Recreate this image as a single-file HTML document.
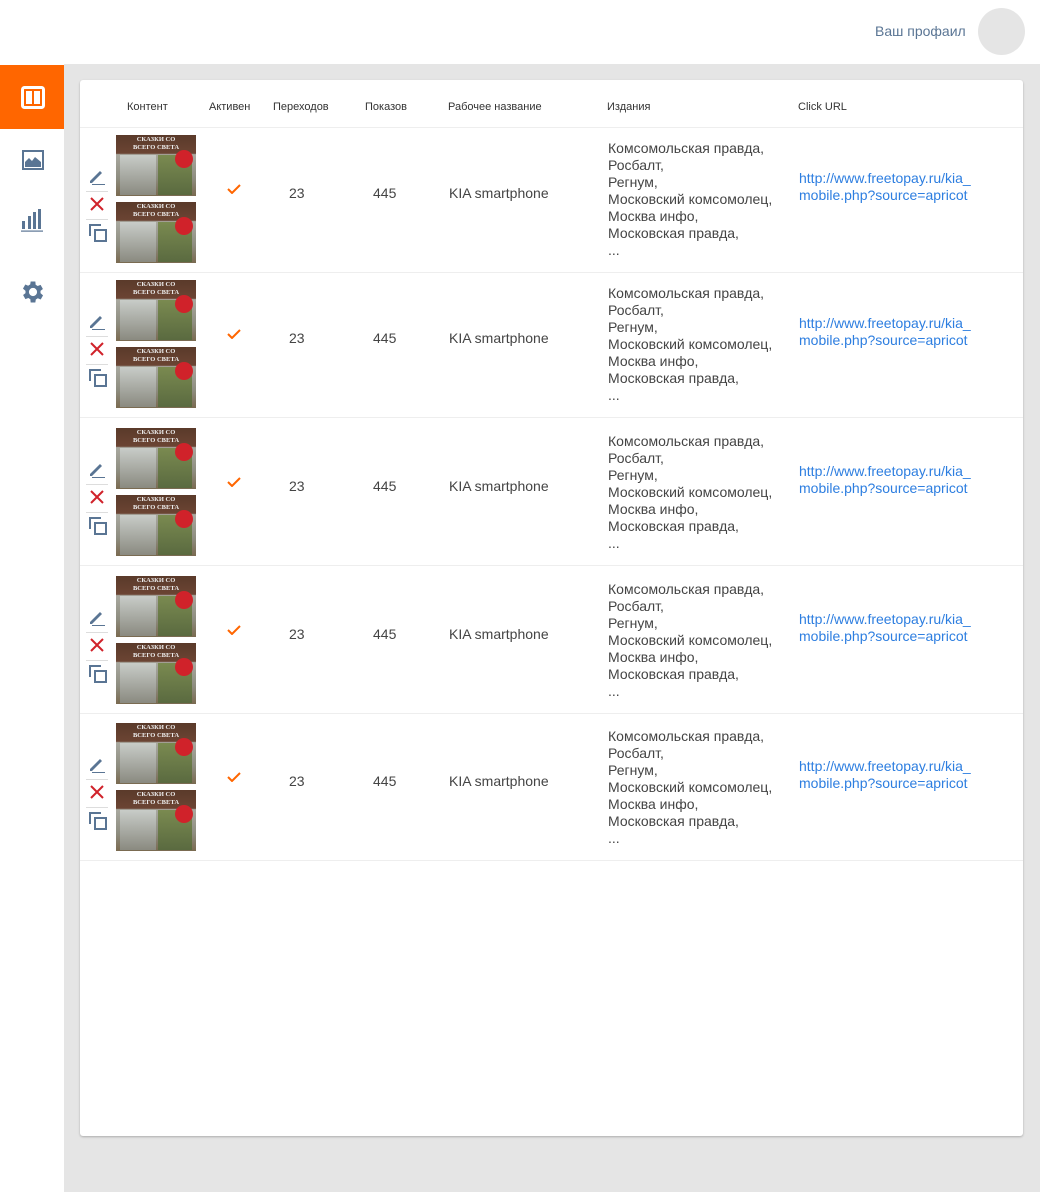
<!DOCTYPE html><html><head><meta charset="utf-8"><style>
*{box-sizing:border-box;margin:0;padding:0}
body{width:1040px;height:1192px;background:#e5e5e5;font-family:"Liberation Sans",sans-serif;position:relative;overflow:hidden;color:#444}
.top{position:absolute;left:0;top:0;width:1040px;height:64px;background:#fff}
.prof{position:absolute;left:875px;top:23px;font-size:14px;color:#5a7594}
.av{position:absolute;left:978px;top:8px;width:47px;height:47px;border-radius:50%;background:#e5e5e5}
.side{position:absolute;left:0;top:64px;width:64px;height:1128px;background:#fff}
.act{position:absolute;left:0;top:65px;width:64px;height:64px;background:#ff6600}
.card{position:absolute;left:80px;top:80px;width:943px;height:1056px;background:#fff;border-radius:3px;box-shadow:0 1px 2px rgba(0,0,0,.25)}
.h{position:absolute;top:21px;font-size:11px;color:#333}
.hl{position:absolute;left:0;right:0;top:47px;border-top:1px solid #eee}
.row{position:absolute;left:0;width:943px;border-bottom:1px solid #eee}
.im{position:absolute;left:36px;width:80px;height:61px;background:linear-gradient(#5a3a2a 0,#6b4433 30%,#a9a9a0 32%,#8e8d80 70%,#7a6a50 100%)}
.im i{position:absolute;left:4px;top:20px;width:36px;height:40px;background:linear-gradient(#c8ccc8,#8a8a80)}
.im b{position:absolute;left:42px;top:20px;width:34px;height:40px;background:linear-gradient(#7a8a50,#5a6a40)}
.im:before{content:"СКАЗКИ СО ВСЕГО СВЕТА";position:absolute;left:10px;right:10px;top:1px;text-align:center;font:bold 6.5px/8px "Liberation Serif",serif;color:#eee}
.im:after{content:"";position:absolute;right:3px;top:15px;width:18px;height:18px;border-radius:50%;background:#d0222a}
.t{position:absolute;font-size:14px;line-height:17px}
.u{color:#2d7ee0}
.sep{position:absolute;left:6px;width:22px;border-top:1px solid #ddd}
</style></head><body>
<div class="top"><div class="prof">Ваш профаил</div><div class="av"></div></div>
<div class="side"></div>
<div class="act"></div>
<svg style="position:absolute;left:21px;top:86px" width="24" height="24" viewBox="0 0 24 24"><rect x="1.5" y="1.5" width="21" height="20" rx="2" fill="none" stroke="#fff" stroke-width="3"/><rect x="5" y="5" width="6" height="13" fill="#fff"/><rect x="13" y="5" width="6" height="13" fill="#fff"/></svg>
<svg style="position:absolute;left:22px;top:150px" width="22" height="20" viewBox="0 0 22 20"><rect x="1" y="1" width="20" height="18" fill="none" stroke="#5a7594" stroke-width="2"/><path d="M3 17 L3 12 L7 8 L10 11 L13 7 L19 12 L19 17Z" fill="#5a7594"/></svg>
<svg style="position:absolute;left:21px;top:208px" width="22" height="24" viewBox="0 0 22 24"><rect x="1" y="13" width="3" height="8" fill="#5a7594"/><rect x="7" y="8" width="3" height="13" fill="#5a7594"/><rect x="12" y="4" width="3" height="17" fill="#5a7594"/><rect x="17" y="1" width="3" height="20" fill="#5a7594"/><rect x="0" y="22.5" width="22" height="1.2" fill="#5a7594"/></svg>
<svg style="position:absolute;left:19px;top:278px" width="28" height="28" viewBox="0 0 24 24"><path fill="#5a7594" d="M19.4 13a7.5 7.5 0 000-2l2.1-1.6-2-3.5-2.5 1a7 7 0 00-1.7-1L15 3h-4l-.4 2.6a7 7 0 00-1.7 1l-2.5-1-2 3.5L6.6 11a7.5 7.5 0 000 2l-2.1 1.6 2 3.5 2.5-1a7 7 0 001.7 1L11 21h4l.4-2.6a7 7 0 001.7-1l2.5 1 2-3.5zM13 15.5a3.5 3.5 0 110-7 3.5 3.5 0 010 7z" transform="translate(-1 0)"/></svg>
<div class="card">
<div class="h" style="left:47px">Контент</div><div class="h" style="left:129px">Активен</div><div class="h" style="left:193px">Переходов</div><div class="h" style="left:285px">Показов</div><div class="h" style="left:368px">Рабочее название</div><div class="h" style="left:527px">Издания</div><div class="h" style="left:718px">Click URL</div>
<div class="hl"></div>
</div>
<div id="rows" style="position:absolute;left:80px;top:0"></div>
<script>
var tops=[128,273,418,566,714],hs=[145,145,148,148,147],offs=[0,0,3,3,2],out="";
for(var i=0;i<5;i++){var T=tops[i],H=hs[i],o=offs[i];
function y(v){return (v+o)+'px';}
out+='<div class="row" style="top:'+T+'px;height:'+H+'px">'+
'<div class="im" style="top:'+y(7)+'"><i></i><b></b></div><div class="im" style="top:'+y(74)+'"><i></i><b></b></div>'+
'<svg style="position:absolute;left:8px;top:'+y(39)+'" width="18" height="18" viewBox="0 0 18 18"><path d="M2 14 L12 4 L14 6 L4 16 L2 16Z" fill="#5a7594"/><rect x="4" y="17" width="13" height="1" fill="#5a7594"/></svg>'+
'<div class="sep" style="top:'+y(63)+'"></div>'+
'<svg style="position:absolute;left:10px;top:'+y(69)+'" width="14" height="14" viewBox="0 0 14 14"><path d="M1 1L13 13M13 1L1 13" stroke="#d0222a" stroke-width="2"/></svg>'+
'<div class="sep" style="top:'+y(91)+'"></div>'+
'<svg style="position:absolute;left:9px;top:'+y(96)+'" width="18" height="18" viewBox="0 0 18 18"><path d="M1 12V1h11" fill="none" stroke="#5a7594" stroke-width="2"/><rect x="6" y="6" width="11" height="11" fill="none" stroke="#5a7594" stroke-width="2"/></svg>'+
'<svg style="position:absolute;left:147px;top:'+y(56)+'" width="14" height="10" viewBox="0 0 14 10"><path d="M1 5L5 9L13 1" fill="none" stroke="#ff6600" stroke-width="2"/></svg>'+
'<div class="t" style="left:209px;top:'+y(57)+'">23</div><div class="t" style="left:293px;top:'+y(57)+'">445</div><div class="t" style="left:369px;top:'+y(57)+'">KIA smartphone</div>'+
'<div class="t" style="left:528px;top:'+y(12)+'">Комсомольская правда,<br>Росбалт,<br>Регнум,<br>Московский комсомолец,<br>Москва инфо,<br>Московская правда,<br>...</div>'+
'<div class="t u" style="left:719px;top:'+y(42)+'">http://www.freetopay.ru/kia_<br>mobile.php?source=apricot</div></div>';}
document.getElementById("rows").innerHTML=out;
</script>
</body></html>
